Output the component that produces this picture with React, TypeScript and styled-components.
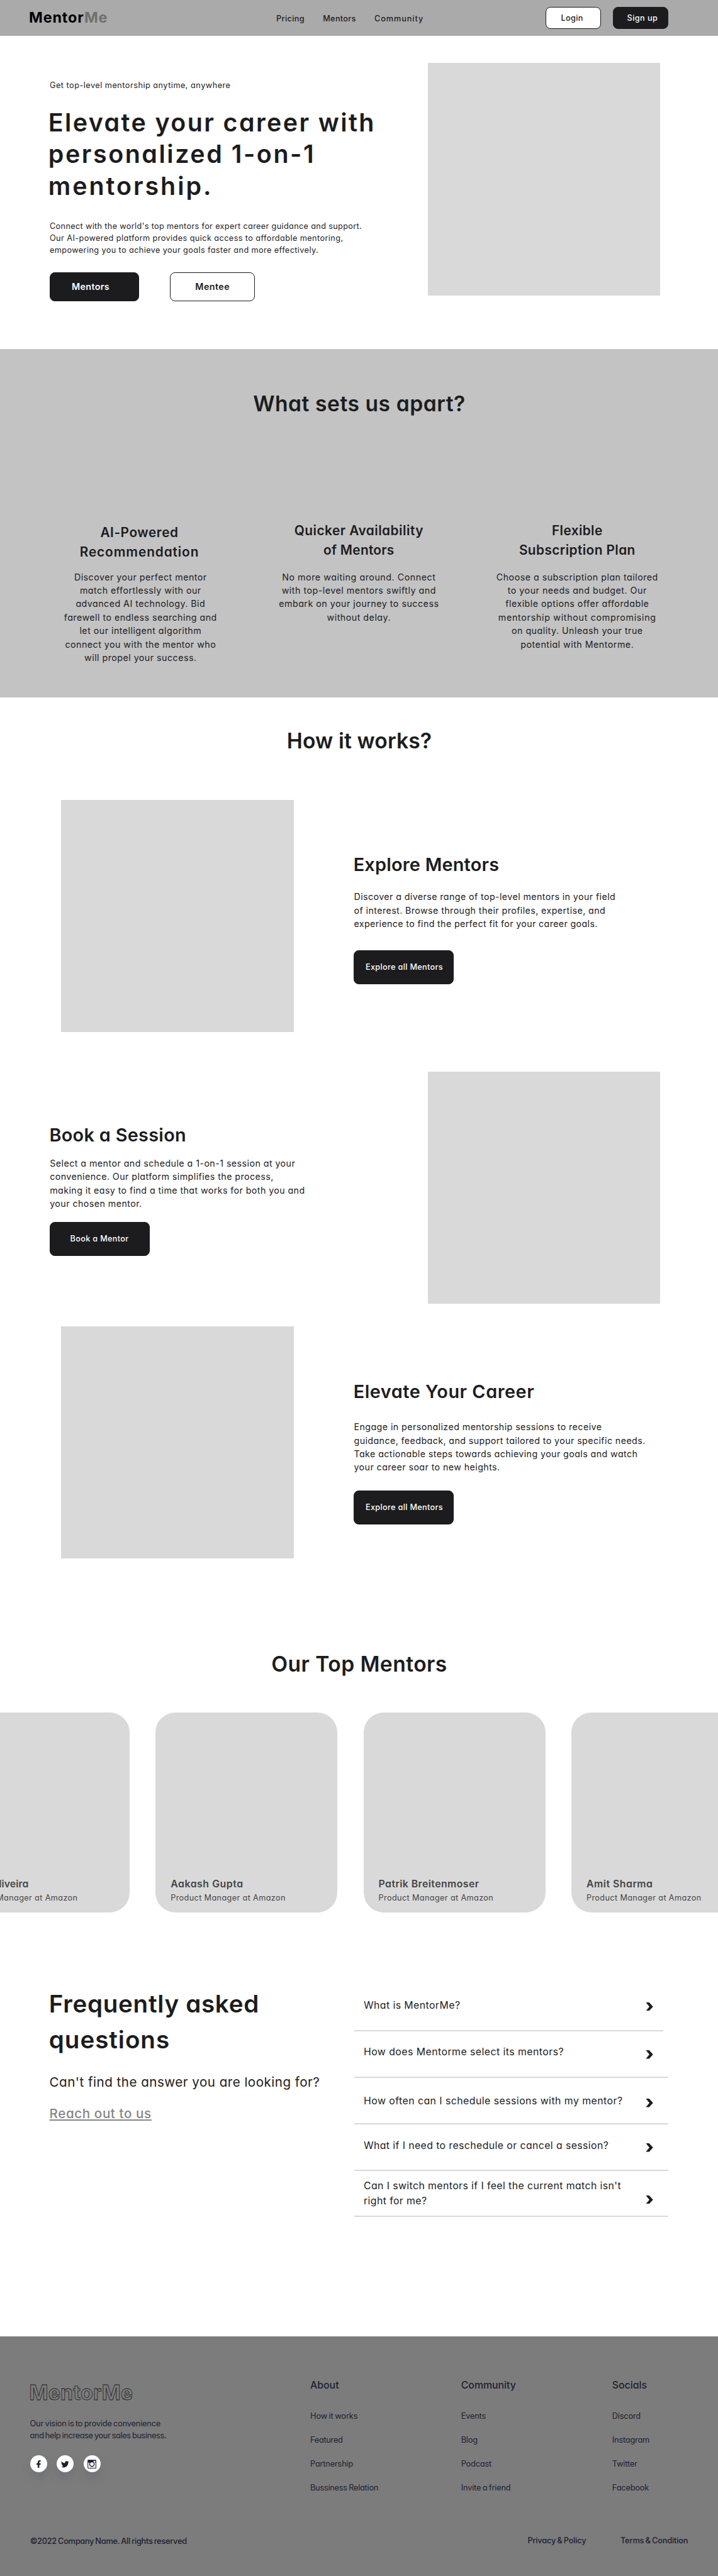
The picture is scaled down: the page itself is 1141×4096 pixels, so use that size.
import React from "react";
import styled, { createGlobalStyle } from "styled-components";
import { FaFacebookF, FaTwitter } from "react-icons/fa";

const ink = "#1c1c1e";
const placeholder = "#d9d9d9";

const GlobalStyle = createGlobalStyle`
  *, *::before, *::after { box-sizing: border-box; }
  body {
    margin: 0;
    background: #fff;
    color: ${ink};
    font-family: Inter, "Open Sans", "Liberation Sans", sans-serif;
    font-feature-settings: "cv11", "calt" 0;
    overflow-x: hidden;
  }
  h1, h2, h3, p, ul { margin: 0; padding: 0; }
  ul { list-style: none; }
`;

type Row = [text: string, tracking: number];

const Line = styled.span<{ $track: number }>`
  display: block;
  white-space: nowrap;
  letter-spacing: ${(p) => p.$track}px;
`;

const Lines = ({ rows }: { rows: Row[] }) => (
  <>
    {rows.map(([text, track]) => (
      <Line key={text} $track={track}>
        {text}
      </Line>
    ))}
  </>
);

const Page = styled.div`
  width: 1141px;
  height: 4096px;
  overflow: hidden;
`;

/* Header */

const Header = styled.header`
  display: grid;
  grid-template-columns: 393px 427.8px auto;
  align-items: center;
  height: 57px;
  padding-left: 46px;
  background: #aaaaaa;
`;

const Logo = styled.div`
  font-size: 23.4px;
  font-weight: 700;
  line-height: 30px;
  letter-spacing: 0.85px;
  color: #000;
  padding-bottom: 1px;

  span {
    color: #6f6f6f;
  }
`;

const Nav = styled.nav`
  display: flex;
  gap: 29.2px;
  padding-top: 1px;
  font-size: 12.68px;
  font-weight: 500;
  line-height: 19px;
`;

const HeaderActions = styled.div`
  display: flex;
  gap: 19px;
`;

const Button = styled.button<{
  $width: number;
  $height: number;
  $inset: number;
  $outline?: boolean;
  $large?: boolean;
}>`
  display: flex;
  align-items: center;
  width: ${(p) => p.$width}px;
  height: ${(p) => p.$height}px;
  padding: 0 0 1px ${(p) => p.$inset}px;
  border: 1px solid ${ink};
  border-radius: 8px;
  background: ${(p) => (p.$outline ? "#fff" : ink)};
  color: ${(p) => (p.$outline ? ink : "#fff")};
  font: inherit;
  font-feature-settings: inherit;
  font-size: ${(p) => (p.$large ? 14.3 : 12.68)}px;
  font-weight: ${(p) => (p.$large ? 600 : 500)};
  line-height: 19px;
`;

/* Hero */

const Hero = styled.section`
  display: grid;
  grid-template-columns: 679.8px 369.3px;
  height: 497.7px;
`;

const HeroCopy = styled.div`
  padding: 69px 0 0 79px;
`;

const Tagline = styled.p`
  font-size: 12.68px;
  line-height: 19px;
`;

const HeroTitle = styled.h1`
  margin: 24.5px 0 0 -2.2px;
  font-size: 39.4px;
  font-weight: 600;
  line-height: 50.7px;
`;

const HeroText = styled.p`
  margin-top: 28.8px;
  font-size: 12.68px;
  line-height: 19.02px;
`;

const HeroActions = styled.div`
  display: flex;
  gap: 49.4px;
  margin: 25.2px 0 0 0.2px;
`;

const Picture = styled.div<{ $top?: number }>`
  width: 369.3px;
  height: 369.3px;
  margin-top: ${(p) => p.$top ?? 0}px;
  background: ${placeholder};
`;

/* Features */

const SectionTitle = styled.h2`
  padding-left: 1px;
  font-size: 33.6px;
  font-weight: 600;
  line-height: 50px;
  text-align: center;
`;

const Features = styled.section`
  height: 554.6px;
  padding-top: 62.8px;
  background: #c3c3c3;
`;

const FeatureGrid = styled.div`
  display: grid;
  grid-template-columns: repeat(3, 347px);
  margin-top: 161.4px;
  padding-left: 49.8px;
  text-align: center;
`;

const FeatureTitle = styled.h3<{ $lowered?: boolean }>`
  height: 77.8px;
  padding: ${(p) => (p.$lowered ? "2.9px 3.6px 0 0" : "0")};
  font-size: 20.8px;
  font-weight: 600;
  line-height: 30.8px;
`;

const BodyText = styled.p`
  font-size: 14.26px;
  line-height: 21.39px;
`;

/* How it works */

const Steps = styled.section`
  padding-top: 43.9px;
`;

const Step = styled.article<{ $gap: number; $reverse?: boolean }>`
  display: grid;
  grid-template-columns: ${(p) => (p.$reverse ? "600.6px 369.3px" : "369.3px auto")};
  column-gap: ${(p) => (p.$reverse ? 0 : 95.8)}px;
  height: 369.3px;
  margin-top: ${(p) => p.$gap}px;
  padding-left: ${(p) => (p.$reverse ? 79.2 : 97.4)}px;
`;

const StepCopy = styled.div<{ $top: number }>`
  padding-top: ${(p) => p.$top}px;
`;

const StepTitle = styled.h3`
  margin-left: -0.8px;
  font-size: 28.8px;
  font-weight: 600;
  line-height: 42px;
`;

const StepText = styled(BodyText)<{ $top: number; $bottom: number }>`
  margin: ${(p) => p.$top}px 0 ${(p) => p.$bottom}px;
`;

/* Mentors */

const Mentors = styled.section`
  padding-top: 143.4px;
`;

const Carousel = styled.div`
  display: flex;
  gap: 41.4px;
  margin: 51.2px 0 0 -83px;
`;

const MentorCard = styled.article`
  display: flex;
  flex: 0 0 289px;
  flex-direction: column;
  justify-content: flex-end;
  height: 318.4px;
  padding: 0 0 14.4px 23.8px;
  border-radius: 31.7px;
  background: ${placeholder};
  color: #444446;
`;

const MentorName = styled.h3`
  font-size: 15.85px;
  font-weight: 600;
  line-height: 20px;
`;

const MentorRole = styled.p`
  margin-top: 1.4px;
  font-size: 12.68px;
  font-weight: 400;
  line-height: 19px;
`;

/* FAQ */

const Faq = styled.section`
  display: grid;
  grid-template-columns: 484px 500px;
  height: 674.4px;
  padding: 115.8px 0 0 78.6px;
`;

const FaqTitle = styled.h2`
  margin: 1px 0 0 -0.8px;
  font-size: 38.6px;
  font-weight: 600;
  line-height: 57.05px;
`;

const FaqLead = styled.p`
  margin-top: 23px;
  font-size: 20.6px;
  line-height: 31px;
`;

const FaqLink = styled.a`
  display: inline-block;
  margin-top: 18.8px;
  color: #868686;
  font-size: 20.6px;
  font-weight: 500;
  line-height: 31px;
  letter-spacing: 0.6px;
  text-decoration: underline;
  text-decoration-thickness: 1.5px;
  text-decoration-skip-ink: none;
  text-underline-offset: 2px;
`;

const Question = styled.li<{ $short?: boolean }>`
  display: grid;
  grid-template-columns: 448.2px 12px;
  column-gap: 0;
  width: ${(p) => (p.$short ? 491 : 499.3)}px;
  height: 73.74px;
  padding-left: 15.4px;
  border-bottom: 2px solid #d9d9d9;
`;

const QuestionText = styled.div<{ $top: number }>`
  padding-top: ${(p) => p.$top}px;
  font-size: 15.85px;
  line-height: 23.7px;
`;

const Chevron = styled.svg<{ $top: number }>`
  display: block;
  width: 12px;
  height: 13.4px;
  margin-top: ${(p) => p.$top}px;
  fill: ${ink};
`;

/* Footer */

const Footer = styled.footer`
  height: 380.7px;
  background: #7c7c7c;
  color: #1b2130;
`;

const FooterMain = styled.div`
  display: grid;
  grid-template-columns: 445.5px 239.7px 240.1px auto;
  height: 249.6px;
  padding-left: 47.5px;
`;

const FooterBrand = styled.div`
  padding-top: 70px;
`;

const OutlineLogo = styled.div`
  margin-left: -1px;
  font-size: 32.2px;
  font-weight: 700;
  line-height: 40px;
  letter-spacing: 0.2px;
  color: transparent;
  -webkit-text-stroke: 0.8px #1f1f1f;
`;

const FooterText = styled.p`
  margin-top: 18.9px;
  font-size: 12.8px;
  line-height: 19px;
  word-spacing: -1px;
`;

const Socials = styled.div`
  display: flex;
  gap: 15.6px;
  margin-top: 22.2px;
`;

const SocialIcon = styled.a`
  display: grid;
  place-items: center;
  width: 27px;
  height: 27px;
  border-radius: 50%;
  background: #fff;
  color: #1b2130;
  box-shadow: 0 10px 14px rgba(90, 90, 110, 0.28);
`;

const FooterColumn = styled.div`
  padding-top: 65.2px;
`;

const FooterHeading = styled.h3`
  font-size: 15.85px;
  font-weight: 500;
  line-height: 24px;
`;

const FooterLinks = styled.ul`
  display: grid;
  gap: 19px;
  margin-top: 27.5px;
  font-size: 12.8px;
  line-height: 19px;
  word-spacing: -1px;
`;

const FooterBar = styled.div`
  display: flex;
  margin-top: 65.9px;
  padding-left: 47.7px;
  font-size: 12.8px;
  font-weight: 500;
  line-height: 19px;
  word-spacing: -1px;
`;

const Legal = styled.div`
  display: flex;
  gap: 54.5px;
  margin: -0.6px 47.6px 0 auto;
`;

const features: { title: Row[]; body: Row[]; lowered?: boolean }[] = [
  {
    lowered: true,
    title: [["AI-Powered", 0.55], ["Recommendation", 0.9]],
    body: [
      ["Discover your perfect mentor", 0.48],
      ["match effortlessly with our", 0.48],
      ["advanced AI technology. Bid", 0.46],
      ["farewell to endless searching and", 0.47],
      ["let our intelligent algorithm", 0.47],
      ["connect you with the mentor who", 0.47],
      ["will propel your success.", 0.47],
    ],
  },
  {
    title: [["Quicker Availability", 0.5], ["of Mentors", 0.28]],
    body: [
      ["No more waiting around. Connect", 0.54],
      ["with top-level mentors swiftly and", 0.5],
      ["embark on your journey to success", 0.5],
      ["without delay.", 0.5],
    ],
  },
  {
    title: [["Flexible", 0.4], ["Subscription Plan", 0.42]],
    body: [
      ["Choose a subscription plan tailored", 0.49],
      ["to your needs and budget. Our", 0.49],
      ["flexible options offer affordable", 0.49],
      ["mentorship without compromising", 0.7],
      ["on quality. Unleash your true", 0.49],
      ["potential with Mentorme.", 0.49],
    ],
  },
];

const mentors: Row[] = [
  ["Hugo Oliveira", 0.05],
  ["Aakash Gupta", 0.55],
  ["Patrik Breitenmoser", 0.42],
  ["Amit Sharma", 0.5],
];

const questions: { rows: Row[]; text: number; arrow: number }[] = [
  { rows: [["What is MentorMe?", 0.42]], text: 20.3, arrow: 27 },
  { rows: [["How does Mentorme select its mentors?", 0.45]], text: 20.7, arrow: 30 },
  { rows: [["How often can I schedule sessions with my mentor?", 0.46]], text: 24.6, arrow: 33 },
  { rows: [["What if I need to reschedule or cancel a session?", 0.4]], text: 21.6, arrow: 30.3 },
  {
    rows: [["Can I switch mentors if I feel the current match isn't", 0.4], ["right for me?", 0.4]],
    text: 12.3,
    arrow: 39.1,
  },
];

const footerColumns: { heading: string; links: Row[] }[] = [
  { heading: "About", links: [["How it works", -0.1], ["Featured", -0.3], ["Partnership", -0.2], ["Bussiness Relation", -0.25]] },
  { heading: "Community", links: [["Events", -0.2], ["Blog", -0.2], ["Podcast", -0.2], ["Invite a friend", -0.17]] },
  { heading: "Socials", links: [["Discord", -0.2], ["Instagram", -0.2], ["Twitter", -0.2], ["Facebook", -0.2]] },
];

export default function App() {
  return (
    <Page>
      <GlobalStyle />
      <Header>
        <Logo>
          Mentor<span>Me</span>
        </Logo>
        <Nav>
          <Line $track={0.38}>Pricing</Line>
          <Line $track={0.33}>Mentors</Line>
          <Line $track={0.95}>Community</Line>
        </Nav>
        <HeaderActions>
          <Button $width={88} $height={35} $inset={23.6} $outline>
            <Line $track={0.4}>Login</Line>
          </Button>
          <Button $width={88} $height={35} $inset={21.8}>
            <Line $track={0.42}>Sign up</Line>
          </Button>
        </HeaderActions>
      </Header>

      <Hero>
        <HeroCopy>
          <Tagline>
            <Lines rows={[["Get top-level mentorship anytime, anywhere", 0.5]]} />
          </Tagline>
          <HeroTitle>
            <Lines rows={[["Elevate your career with", 2.4], ["personalized 1-on-1", 2.55], ["mentorship.", 2.95]]} />
          </HeroTitle>
          <HeroText>
            <Lines
              rows={[
                ["Connect with the world's top mentors for expert career guidance and support.", 0.35],
                ["Our AI-powered platform provides quick access to affordable mentoring,", 0.425],
                ["empowering you to achieve your goals faster and more effectively.", 0.405],
              ]}
            />
          </HeroText>
          <HeroActions>
            <Button $width={141.5} $height={46.8} $inset={33.8} $large>
              <Line $track={0.35}>Mentors</Line>
            </Button>
            <Button $width={134.5} $height={46.8} $inset={39.2} $large $outline>
              <Line $track={0.45}>Mentee</Line>
            </Button>
          </HeroActions>
        </HeroCopy>
        <Picture $top={43.4} />
      </Hero>

      <Features>
        <SectionTitle>
          <Lines rows={[["What sets us apart?", 0.55]]} />
        </SectionTitle>
        <FeatureGrid>
          {features.map((f) => (
            <div key={f.title[0][0]}>
              <FeatureTitle $lowered={f.lowered}>
                <Lines rows={f.title} />
              </FeatureTitle>
              <BodyText>
                <Lines rows={f.body} />
              </BodyText>
            </div>
          ))}
        </FeatureGrid>
      </Features>

      <Steps>
        <SectionTitle>
          <Lines rows={[["How it works?", 0.15]]} />
        </SectionTitle>
        <Step $gap={68.5}>
          <Picture />
          <StepCopy $top={82.5}>
            <StepTitle>
              <Lines rows={[["Explore Mentors", 0.25]]} />
            </StepTitle>
            <StepText $top={19.1} $bottom={31.6}>
              <Lines
                rows={[
                  ["Discover a diverse range of top-level mentors in your field", 0.4],
                  ["of interest. Browse through their profiles, expertise, and", 0.41],
                  ["experience to find the perfect fit for your career goals.", 0.35],
                ]}
              />
            </StepText>
            <Button $width={158.6} $height={53.9} $inset={17.5}>
              <Line $track={0.33}>Explore all Mentors</Line>
            </Button>
          </StepCopy>
        </Step>
        <Step $gap={62.8} $reverse>
          <StepCopy $top={80.4}>
            <StepTitle>
              <Lines rows={[["Book a Session", 0.33]]} />
            </StepTitle>
            <StepText $top={12.9} $bottom={18.4}>
              <Lines
                rows={[
                  ["Select a mentor and schedule a 1-on-1 session at your", 0.44],
                  ["convenience. Our platform simplifies the process,", 0.43],
                  ["making it easy to find a time that works for both you and", 0.41],
                  ["your chosen mentor.", 0.43],
                ]}
              />
            </StepText>
            <Button $width={158.6} $height={53.9} $inset={31.4}>
              <Line $track={0.33}>Book a Mentor</Line>
            </Button>
          </StepCopy>
          <Picture />
        </Step>
        <Step $gap={35.6}>
          <Picture />
          <StepCopy $top={83}>
            <StepTitle>
              <Lines rows={[["Elevate Your Career", 0.55]]} />
            </StepTitle>
            <StepText $top={24.6} $bottom={26.3}>
              <Lines
                rows={[
                  ["Engage in personalized mentorship sessions to receive", 0.42],
                  ["guidance, feedback, and support tailored to your specific needs.", 0.405],
                  ["Take actionable steps towards achieving your goals and watch", 0.41],
                  ["your career soar to new heights.", 0.41],
                ]}
              />
            </StepText>
            <Button $width={158.6} $height={53.9} $inset={17.5}>
              <Line $track={0.33}>Explore all Mentors</Line>
            </Button>
          </StepCopy>
        </Step>
      </Steps>

      <Mentors>
        <SectionTitle>
          <Lines rows={[["Our Top Mentors", 0.45]]} />
        </SectionTitle>
        <Carousel>
          {mentors.map((m) => (
            <MentorCard key={m[0]}>
              <MentorName>
                <Lines rows={[m]} />
              </MentorName>
              <MentorRole>
                <Lines rows={[["Product Manager at Amazon", 0.37]]} />
              </MentorRole>
            </MentorCard>
          ))}
        </Carousel>
      </Mentors>

      <Faq>
        <div>
          <FaqTitle>
            <Lines rows={[["Frequently asked", 0.7], ["questions", 0.95]]} />
          </FaqTitle>
          <FaqLead>
            <Lines rows={[["Can't find the answer you are looking for?", 0.48]]} />
          </FaqLead>
          <FaqLink>Reach out to us</FaqLink>
        </div>
        <ul>
          {questions.map((q, i) => (
            <Question key={q.rows[0][0]} $short={i === 0}>
              <QuestionText $top={q.text}>
                <Lines rows={q.rows} />
              </QuestionText>
              <Chevron $top={q.arrow} viewBox="0 0 12 13.4">
                <path d="M0.4 0H5.6L11.8 6.7L5.6 13.4H0.4L6 6.7Z" />
              </Chevron>
            </Question>
          ))}
        </ul>
      </Faq>

      <Footer>
        <FooterMain>
          <FooterBrand>
            <OutlineLogo>MentorMe</OutlineLogo>
            <FooterText>
              <Lines
                rows={[
                  ["Our vision is to provide convenience", -0.2],
                  ["and help increase your sales business.", -0.37],
                ]}
              />
            </FooterText>
            <Socials>
              <SocialIcon>
                <FaFacebookF size={12.7} />
              </SocialIcon>
              <SocialIcon>
                <FaTwitter size={12.7} />
              </SocialIcon>
              <SocialIcon>
                <svg width="14.2" height="14.2" viewBox="0 0 18 18" fill="none">
                  <rect x="0.9" y="0.9" width="16.2" height="16.2" rx="1.2" stroke="currentColor" strokeWidth="1.4" />
                  <path d="M1 1H17V6H13A5.4 5.4 0 0 0 5 6H1Z" fill="currentColor" />
                  <circle cx="9" cy="9" r="4.6" fill="#fff" stroke="currentColor" strokeWidth="1.8" />
                  <rect x="12.4" y="2.3" width="3.4" height="3.4" rx="0.4" fill="#fff" />
                </svg>
              </SocialIcon>
            </Socials>
          </FooterBrand>
          {footerColumns.map((c) => (
            <FooterColumn key={c.heading}>
              <FooterHeading>{c.heading}</FooterHeading>
              <FooterLinks>
                {c.links.map(([text, track]) => (
                  <li key={text}>
                    <Line $track={track}>{text}</Line>
                  </li>
                ))}
              </FooterLinks>
            </FooterColumn>
          ))}
        </FooterMain>
        <FooterBar>
          <Line $track={-0.28}>©2022 Company Name. All rights reserved</Line>
          <Legal>
            <Line $track={-0.19}>{"Privacy & Policy"}</Line>
            <Line $track={-0.17}>{"Terms & Condition"}</Line>
          </Legal>
        </FooterBar>
      </Footer>
    </Page>
  );
}
